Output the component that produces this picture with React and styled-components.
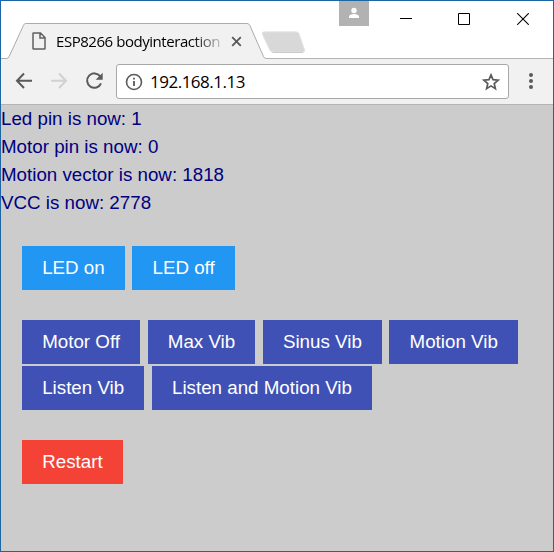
import React from "react";
import styled, { createGlobalStyle } from "styled-components";

const GlobalStyle = createGlobalStyle`
  *, *::before, *::after { box-sizing: border-box; }
  body { margin: 0; }
  svg { display: block; flex: none; }
`;

const Window = styled.div`
  width: 554px;
  height: 552px;
  display: flex;
  flex-direction: column;
  border: 1px solid #1c66a5;
  background: #ccc;
  overflow: hidden;
`;

const TitleBar = styled.header`
  flex: none;
  height: 58px;
  display: flex;
  align-items: flex-start;
  background:
    linear-gradient(#b3b3b3, #b3b3b3) 0 57px / 100% 1px no-repeat,
    #fff;
`;

const Tab = styled.div`
  position: relative;
  flex: none;
  width: 260px;
  height: 36px;
  margin-top: 22px;
  display: flex;
  align-items: center;
  padding: 0 0 0 31px;
`;

const TabShape = styled.svg`
  position: absolute;
  left: 0;
  top: 0;
`;

const PageIcon = styled.svg`
  position: relative;
`;

const TabTitle = styled.div`
  position: relative;
  flex: none;
  width: 166px;
  margin-left: 10px;
  overflow: hidden;
  white-space: nowrap;
  font: 15px/22px "Open Sans", "Noto Sans", sans-serif;
  letter-spacing: ${(p) => p.$tracking};
  color: #000;
  mask-image: linear-gradient(to right, #000 136px, rgba(0, 0, 0, 0.15) 166px);
`;

const CloseIcon = styled.svg`
  position: relative;
  margin-left: 9px;
`;

const NewTab = styled.svg`
  margin: 30px 0 0 0;
`;

const Profile = styled.div`
  flex: none;
  width: 30px;
  height: 25px;
  margin-left: auto;
  background: #b2b2b2;
`;

const Controls = styled.div`
  flex: none;
  display: flex;
  gap: 46px;
  padding: 12px 24px 0 31px;
`;

const Toolbar = styled.nav`
  flex: none;
  height: 46px;
  display: flex;
  align-items: flex-start;
  padding: 5px 0 0 12px;
  background: #f1f1f1;
  border-bottom: 1px solid #b4b4b4;
`;

const NavIcons = styled.div`
  flex: none;
  width: 103px;
  height: 34px;
`;

const AddressBar = styled.div`
  flex: none;
  width: 393px;
  height: 35px;
  display: flex;
  align-items: center;
  padding: 0 8px 0 8px;
  border: 1px solid #a8a8a8;
  border-radius: 3px;
  background: #fff;
`;

const Address = styled.span`
  flex: 1;
  margin-left: 7px;
  font: 17px/24px "Open Sans", "Noto Sans", sans-serif;
  letter-spacing: ${(p) => p.$tracking};
  color: #000;
`;

const MenuIcon = styled.svg`
  margin: 8px 0 0 19px;
`;

const Page = styled.main`
  flex: 1;
  font-family: "Liberation Sans", Arial, sans-serif;
  font-size: 18.75px;
  line-height: 28px;
`;

const Status = styled.p`
  margin: 0;
  color: #000080;
  white-space: nowrap;
`;

const Sections = styled.div`
  display: flex;
  flex-direction: column;
  gap: 30px;
  padding: 29px 21px 0;
`;

const ButtonRow = styled.div`
  display: flex;
  flex-wrap: wrap;
  gap: 2px 7.4px;
`;

const tones = { blue: "#2196f3", indigo: "#3f51b5", red: "#f44336" };

const Button = styled.button`
  height: 44px;
  padding: 0 20.2px 1px;
  border: 0;
  background: ${(p) => tones[p.$tone]};
  color: #fff;
  font: inherit;
  white-space: nowrap;
`;

const lines = [
  "Led pin is now: 1",
  "Motor pin is now: 0",
  "Motion vector is now: 1818",
  "VCC is now: 2778",
];

const groups = [
  { tone: "blue", labels: ["LED on", "LED off"] },
  {
    tone: "indigo",
    labels: ["Motor Off", "Max Vib", "Sinus Vib", "Motion Vib", "Listen Vib", "Listen and Motion Vib"],
  },
  { tone: "red", labels: ["Restart"] },
];

export default function App() {
  return (
    <Window>
      <GlobalStyle />
      <TitleBar>
        <Tab>
          <TabShape width="266" height="36" viewBox="0 0 266 36">
            <path d="M0 36V35.5H5.5Q7.3 35.5 8 33.8L22.5 2.3Q23.2 .5 24.5 .5H246Q248 .5 248.8 2.3L262.5 33.5Q263.3 35.5 265.5 35.5V36Z" fill="#f1f1f1" />
            <path d="M0 35.5H5.5Q7.3 35.5 8 33.8L22.5 2.3Q23.2 .5 24.5 .5H246Q248 .5 248.8 2.3L262.5 33.5Q263.3 35.5 265.5 35.5" fill="none" stroke="#acacac" />
          </TabShape>
          <PageIcon width="14" height="18" viewBox="0 0 14 18">
            <path d="M1.6 1H8.5L13 5.5V16.4Q13 17 12.4 17H1.6Q1 17 1 16.4V1.6Q1 1 1.6 1ZM8 1V6H13" fill="none" stroke="#606060" strokeWidth="1.5" />
          </PageIcon>
          <TabTitle $tracking="-0.45px">ESP8266 bodyinteraction</TabTitle>
          <CloseIcon width="11" height="11" viewBox="0 0 11 11">
            <path d="M1.2 1.2L9.8 9.8M9.8 1.2L1.2 9.8" stroke="#585858" strokeWidth="1.8" />
          </CloseIcon>
        </Tab>
        <NewTab width="46" height="24" viewBox="0 0 46 24">
          <path d="M3.5 .8H35Q37 .8 38 2.5L43.6 19Q44.2 21.2 42 21.2H12Q10 21.2 9 19.5L1.2 3Q.5 .8 3.5 .8Z" fill="#d8d8d8" stroke="#e5e5e5" />
          <path d="M11.5 21.5H42" stroke="#cacaca" />
        </NewTab>
        <Profile>
          <svg width="30" height="25" viewBox="0 0 30 25">
            <circle cx="15" cy="9.5" r="2.7" fill="#fff" />
            <path d="M10 17V15.8C10 13.8 12.5 13 15 13S20 13.8 20 15.8V17Z" fill="#fff" />
          </svg>
        </Profile>
        <Controls>
          <svg width="12" height="12" viewBox="0 0 12 12"><path d="M0 5.5H12" stroke="#000" /></svg>
          <svg width="12" height="12" viewBox="0 0 12 12"><path d="M.5 .5H11.5V11.5H.5Z" stroke="#000" fill="none" /></svg>
          <svg width="13" height="12" viewBox="0 0 13 12"><path d="M1.2 .2L12.8 11.8M12.8 .2L1.2 11.8" stroke="#000" strokeWidth="1.1" /></svg>
        </Controls>
      </TitleBar>
      <Toolbar>
        <NavIcons>
          <svg width="103" height="34" viewBox="13 64 103 34" fill="none" strokeWidth="2">
            <path d="M32 80.7H17.5M24 73.5L17 80.7L24 88" stroke="#5a5a5a" />
            <path d="M51 80.7H65.5M59 73.5L66 80.7L59 88" stroke="#d1d1d1" />
            <path d="M100.2 76.4A7.2 7.2 0 1 0 101 83.3" stroke="#5a5a5a" />
            <path d="M102.7 72.8V79.8H95.7Z" fill="#5a5a5a" />
          </svg>
        </NavIcons>
        <AddressBar>
          <svg width="18" height="18" viewBox="0 0 18 18">
            <circle cx="9" cy="9" r="7.5" fill="none" stroke="#5a5a5a" strokeWidth="1.6" />
            <path d="M8.1 8H9.9V13H8.1ZM8.1 4.8H9.9V6.6H8.1Z" fill="#5a5a5a" />
          </svg>
          <Address $tracking="-0.5px">192.168.1.13</Address>
          <svg width="18" height="18" viewBox="0 0 18 18">
            <path d="M9 1.9L11 6.7L16.2 7.1L12.2 10.5L13.4 15.6L9 12.9L4.6 15.6L5.8 10.5L1.8 7.1L7 6.7Z" fill="none" stroke="#5a5a5a" strokeWidth="1.7" />
          </svg>
        </AddressBar>
        <MenuIcon width="6" height="18" viewBox="0 0 6 18" fill="#5a5a5a">
          <circle cx="3" cy="3" r="2" />
          <circle cx="3" cy="9" r="2" />
          <circle cx="3" cy="15" r="2" />
        </MenuIcon>
      </Toolbar>
      <Page>
        {lines.map((line) => <Status key={line}>{line}</Status>)}
        <Sections>
          {groups.map((group) => (
            <ButtonRow key={group.tone}>
              {group.labels.map((label) => <Button key={label} $tone={group.tone}>{label}</Button>)}
            </ButtonRow>
          ))}
        </Sections>
      </Page>
    </Window>
  );
}
